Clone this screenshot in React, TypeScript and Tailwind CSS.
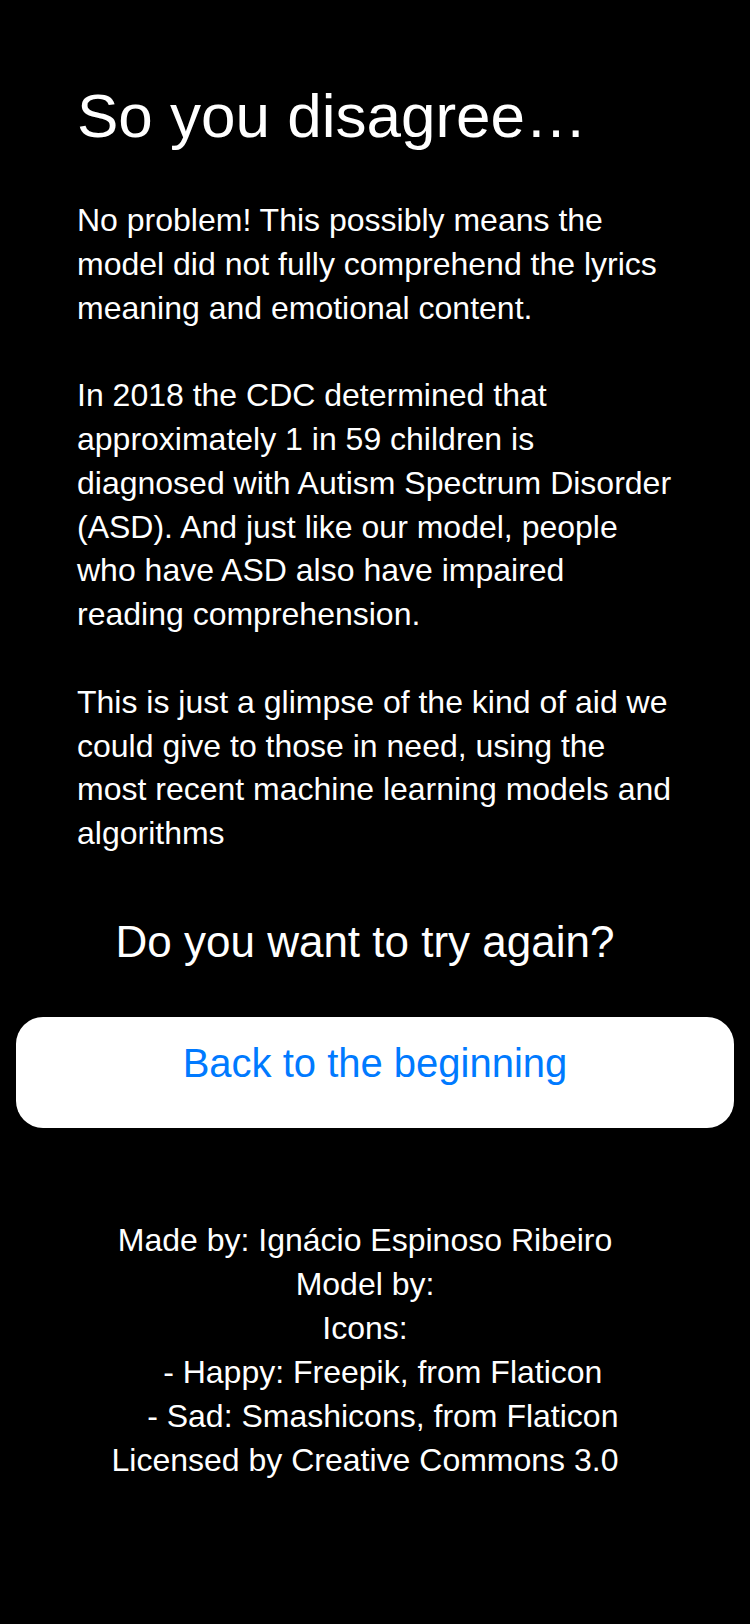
import React from "react";

const font = { fontFamily: '"Liberation Sans", Arial, Helvetica, sans-serif' };

const body = [
  "No problem! This possibly means the",
  "model did not fully comprehend the lyrics",
  "meaning and emotional content.",
  "",
  "In 2018 the CDC determined that",
  "approximately 1 in 59 children is",
  "diagnosed with Autism Spectrum Disorder",
  "(ASD). And just like our model, people",
  "who have ASD also have impaired",
  "reading comprehension.",
  "",
  "This is just a glimpse of the kind of aid we",
  "could give to those in need, using the",
  "most recent machine learning models and",
  "algorithms",
];

const credits = [
  "Made by: Ignácio Espinoso Ribeiro",
  "Model by:",
  "Icons:",
  "    - Happy: Freepik, from Flaticon",
  "    - Sad: Smashicons, from Flaticon",
  "Licensed by Creative Commons 3.0",
];

export default function App() {
  return (
    <div className="min-h-[1624px] w-full bg-black text-white" style={font}>
      <div className="flex flex-col pt-[86px]">
        <h1 className="pl-[77px] text-[62px] leading-[60px] font-normal whitespace-nowrap">
          So you disagree…
        </h1>
        <div className="mt-[53px] pl-[77px] text-[32px] leading-[43.8px]">
          {body.map((l, i) => (
            <div key={i} className="h-[43.8px] whitespace-nowrap">
              {l}
            </div>
          ))}
        </div>
        <p className="mt-[64px] mr-[20px] text-center text-[44px] leading-[44px] whitespace-nowrap">
          Do you want to try again?
        </p>
        <div className="mt-[53px] mx-[16px] h-[111px] rounded-[27px] bg-white flex justify-center pt-[26px]">
          <span className="text-[40px] leading-[40px] text-[#007AFF]">Back to the beginning</span>
        </div>
        <div className="mt-[90px] mr-[20px] flex flex-col items-center text-[32px] leading-[44px]">
          {credits.map((l, i) => (
            <div key={i} className="whitespace-pre">
              {l}
            </div>
          ))}
        </div>
      </div>
    </div>
  );
}
